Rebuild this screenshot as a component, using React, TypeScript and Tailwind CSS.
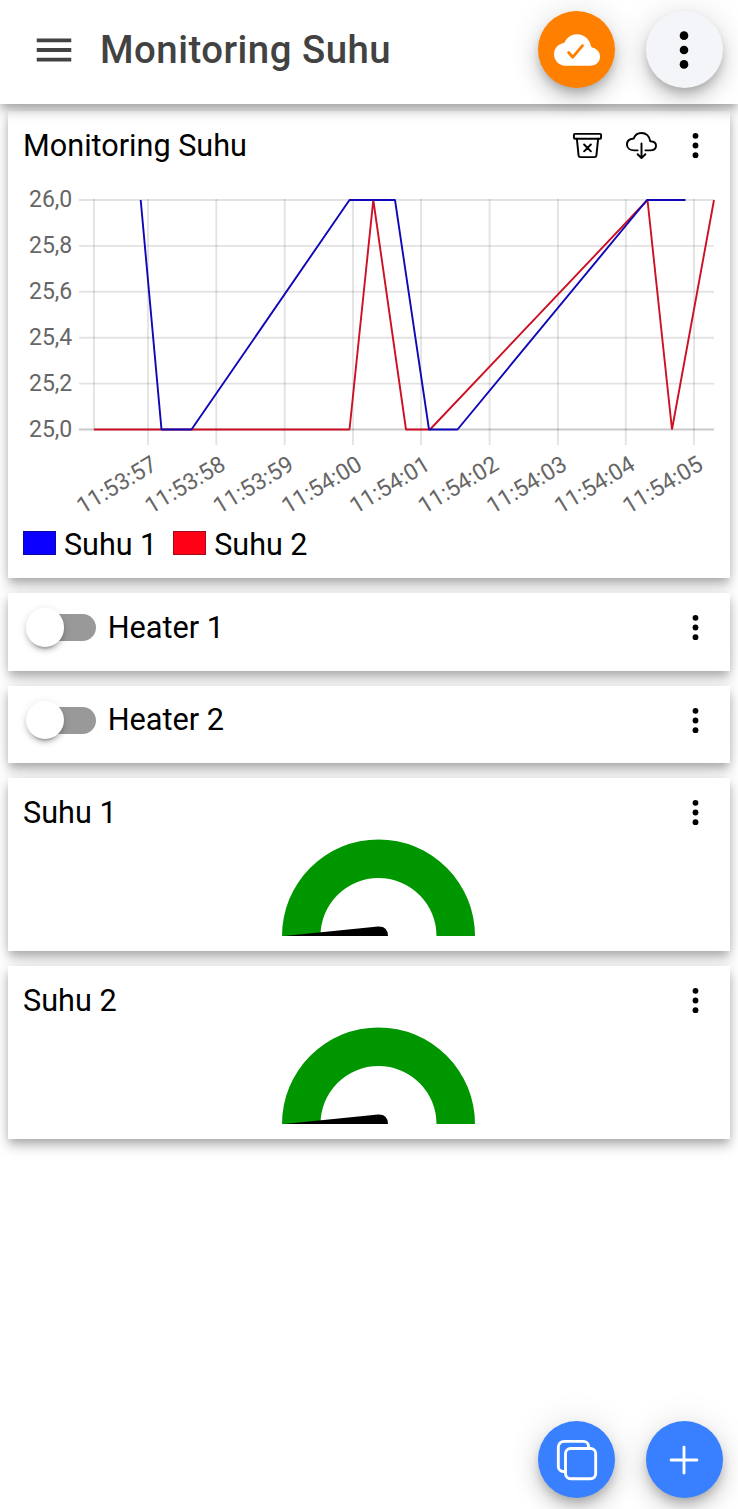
import type { ReactNode } from 'react';
import {
  IoAdd,
  IoCloudDone,
  IoCloudDownloadOutline,
  IoCopyOutline,
  IoEllipsisVertical,
  IoMenuSharp,
  IoTrashBinOutline,
} from 'react-icons/io5';

const Y_LABELS = ['26,0', '25,8', '25,6', '25,4', '25,2', '25,0'];
const X_TICKS = [
  { x: 148, label: '11:53:57' },
  { x: 216.3, label: '11:53:58' },
  { x: 284.7, label: '11:53:59' },
  { x: 353, label: '11:54:00' },
  { x: 421, label: '11:54:01' },
  { x: 489.6, label: '11:54:02' },
  { x: 558, label: '11:54:03' },
  { x: 625.8, label: '11:54:04' },
  { x: 694, label: '11:54:05' },
];
const TOP = 200;
const BOTTOM = 429.5;
const STEP = (BOTTOM - TOP) / 5;

function Card({ className, children }: { className: string; children: ReactNode }) {
  return (
    <section
      className={`bg-white shadow-[0_4px_8px_-2px_rgba(0,0,0,0.2),0_8px_10px_0_rgba(0,0,0,0.14),0_2px_19px_0_rgba(0,0,0,0.12)] ${className}`}
    >
      {children}
    </section>
  );
}

function Fab({ className, children }: { className: string; children: ReactNode }) {
  return (
    <button
      className={`flex size-[77px] items-center justify-center rounded-full text-[46px] shadow-[0_6px_10px_-2px_rgba(0,0,0,0.2),0_12px_19px_0_rgba(0,0,0,0.14),0_2px_35px_0_rgba(0,0,0,0.12)] ${className}`}
    >
      {children}
    </button>
  );
}

function Chart() {
  return (
    <svg className="block" width="723" height="335" viewBox="8 186 723 335">
      {Y_LABELS.map((label, i) => (
        <g key={label}>
          <line
            x1="79"
            x2="714"
            y1={TOP + i * STEP}
            y2={TOP + i * STEP}
            stroke={i === 5 ? '#c9c9c9' : '#e3e3e3'}
            strokeWidth="1.9"
          />
          <text x="72.3" y={TOP + i * STEP + 7} textAnchor="end" fontSize="23" fill="#666">
            {label}
          </text>
        </g>
      ))}
      <line x1="94" x2="94" y1="199" y2="430" stroke="#000" strokeOpacity="0.11" strokeWidth="1.9" />
      {X_TICKS.map(({ x, label }) => (
        <g key={label}>
          <line x1={x} x2={x} y1="199" y2="445" stroke="#000" strokeOpacity="0.11" strokeWidth="1.9" />
          <text
            transform={`translate(${x + 10.7} 468.7) rotate(-31)`}
            textAnchor="end"
            fontSize="23"
            fill="#666"
          >
            {label}
          </text>
        </g>
      ))}
      <polyline
        points="94,429.5 349.5,429.5 373.3,200 406,429.5 430,429.5 647.5,200 672,429.5 714,200"
        fill="none"
        stroke="#cc1025"
        strokeWidth="1.9"
        strokeLinejoin="bevel"
      />
      <polyline
        points="140.7,200 161.5,429.5 191.5,429.5 349.5,200 395,200 429,429.5 457.5,429.5 647,200 685.5,200"
        fill="none"
        stroke="#1008b8"
        strokeWidth="1.9"
        strokeLinejoin="bevel"
      />
    </svg>
  );
}

function HeaterCard({ name }: { name: string }) {
  return (
    <Card className="flex h-[77.5px] items-start pl-[18.3px] pr-[19px]">
      <div className="mt-[15px] flex h-[39px] w-[70px] items-center">
        <div className="flex h-[27px] w-[65px] translate-x-[5px] items-center rounded-full bg-[#999]">
          <div className="size-[38.5px] shrink-0 -translate-x-[5px] rounded-full bg-white shadow-[0_6px_2px_-4px_rgba(0,0,0,0.2),0_4px_4px_0_rgba(0,0,0,0.14),0_2px_10px_0_rgba(0,0,0,0.12)]" />
        </div>
      </div>
      <span className="ml-[11.7px] mt-[14.5px] text-[30.7px] leading-[39px]">{name}</span>
      <IoEllipsisVertical className="ml-auto mt-[19px] text-[31px]" />
    </Card>
  );
}

function GaugeCard({ name }: { name: string }) {
  return (
    <Card className="h-[173px]">
      <div className="flex h-[61px] items-start justify-between pl-[15.4px] pr-[19px] pt-[15px]">
        <h2 className="text-[30.6px] leading-[39px]">{name}</h2>
        <IoEllipsisVertical className="mt-1 text-[31px]" />
      </div>
      <svg className="ml-[274px] block" width="194" height="97" viewBox="0 0 194 97">
        <path d="M0 97A96.5 96.5 0 0 1 193 97H154.5A58 58 0 0 0 38.5 97Z" fill="#009600" />
        <path d="M2 97L96 87.4Q106 87 106 97Z" fill="#000" />
      </svg>
    </Card>
  );
}

export default function App() {
  return (
    <div className="flex h-[1509px] w-[738px] flex-col overflow-hidden bg-white font-[Roboto,sans-serif] text-black">
      <header className="z-10 flex h-[104px] shrink-0 items-start bg-white pl-[30.5px] pr-[15.5px] shadow-[0_4px_8px_-2px_rgba(0,0,0,0.2),0_8px_10px_0_rgba(0,0,0,0.14),0_2px_19px_0_rgba(0,0,0,0.12)]">
        <IoMenuSharp className="mt-[26.5px] text-[46px] text-[#424242]" />
        <h1 className="ml-[23.5px] mt-[26px] text-[38.4px] font-medium leading-[48px] tracking-[0.48px] text-[#424242]">
          Monitoring Suhu
        </h1>
        <div className="ml-auto mt-[11.3px] flex gap-[30.5px]">
          <Fab className="bg-[#ff8000] text-white">
            <IoCloudDone />
          </Fab>
          <Fab className="bg-[#f4f5f8] text-black">
            <IoEllipsisVertical />
          </Fab>
        </div>
      </header>

      <main className="flex flex-col gap-[15px] pl-[7.7px] pr-[7.8px] pt-[7px]">
        <Card className="h-[467px]">
          <div className="flex h-[75px] items-start pl-[15.4px] pr-[19px] pt-[15px]">
            <h2 className="text-[30.6px] leading-[39px]">Monitoring Suhu</h2>
            <div className="ml-auto mt-1 flex gap-[23px] text-[31px]">
              <IoTrashBinOutline />
              <IoCloudDownloadOutline />
              <IoEllipsisVertical />
            </div>
          </div>
          <Chart />
          <div className="flex items-center gap-4 pl-[15.3px] pt-1 text-[30.5px] leading-[39px]">
            <div className="flex items-center gap-2">
              <span className="-mt-[3px] h-[24px] w-[33px] border border-[#0a0aa0] bg-[#0b00ff]" />
              <span>Suhu 1</span>
            </div>
            <div className="flex items-center gap-2">
              <span className="-mt-[3px] h-[24px] w-[33px] border border-[#a00a1e] bg-[#ff0015]" />
              <span>Suhu 2</span>
            </div>
          </div>
        </Card>
        <HeaterCard name="Heater 1" />
        <HeaterCard name="Heater 2" />
        <GaugeCard name="Suhu 1" />
        <GaugeCard name="Suhu 2" />
      </main>

      <footer className="mt-auto flex justify-end gap-[30.5px] pb-[10.8px] pr-[15.5px]">
        <Fab className="bg-[#3880ff] text-white">
          <IoCopyOutline />
        </Fab>
        <Fab className="bg-[#3880ff] text-white">
          <IoAdd />
        </Fab>
      </footer>
    </div>
  );
}
